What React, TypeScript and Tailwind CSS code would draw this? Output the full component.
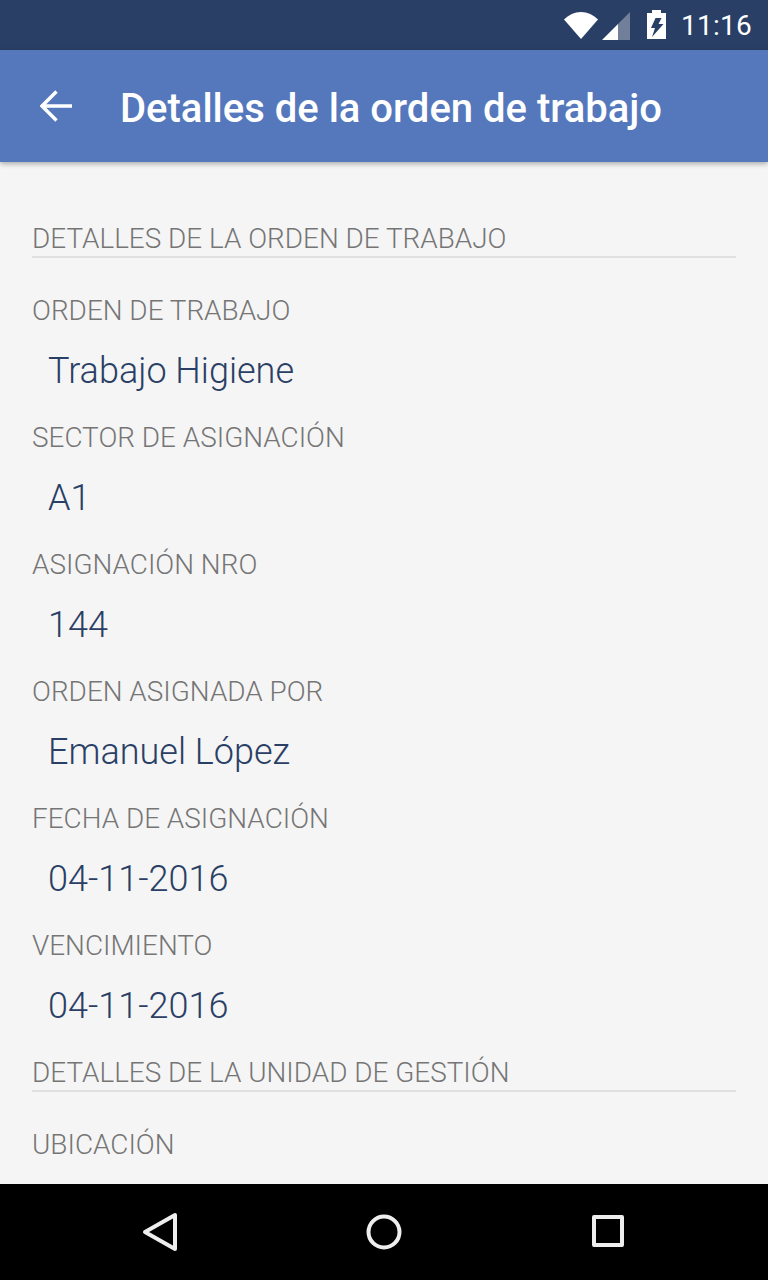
const fields = [
  { label: "ORDEN DE TRABAJO", value: "Trabajo Higiene" },
  { label: "SECTOR DE ASIGNACIÓN", value: "A1" },
  { label: "ASIGNACIÓN NRO", value: "144" },
  { label: "ORDEN ASIGNADA POR", value: "Emanuel López" },
  { label: "FECHA DE ASIGNACIÓN", value: "04-11-2016" },
  { label: "VENCIMIENTO", value: "04-11-2016" }
];

function SectionTitle({ text }: { text: string }) {
  return (
    <div className="h-[36px] border-b-2 border-[#e0e0e0] text-[27.9px] leading-[34px] font-light text-[#757575]">
      {text}
    </div>
  );
}

function StatusIcons() {
  return (
    <svg width="66" height="28" viewBox="0 0 66 28" className="mt-[1px]">
      <path d="M0 7.500C4.500 3 10.500 0 17 0s12.500 3 17 7.500L17 27z" fill="#fff" />
      <path d="M38 28L54 12v16z" fill="#fff" />
      <path d="M54 12L66 0v28H54z" fill="#717f9b" />
    </svg>
  );
}

function Battery() {
  return (
    <svg width="19" height="29" viewBox="0 0 19 29">
      <path d="M5 0h9v3h5v26H0V3h5z" fill="#fff" />
      <path d="M8.500 8h6l-3 6h5L5 27l3-9H4z" fill="#2a3f66" />
    </svg>
  );
}

export default function App() {
  return (
    <div className="flex h-[1280px] w-[768px] flex-col overflow-hidden bg-[#f5f5f5] font-['Roboto',sans-serif]">
      <div className="flex h-[50px] shrink-0 items-center justify-end bg-[#2a3f66] pr-4 text-white">
        <StatusIcons />
        <div className="ml-[17px] mr-[15px] mt-[-1px]"><Battery /></div>
        <span className="pt-[2px] text-[28px] leading-none tracking-[0.25px]">11:16</span>
      </div>

      <div className="z-10 flex h-[112px] shrink-0 items-center bg-[#5578bd] pl-[40px] shadow-[0_2px_5px_rgba(0,0,0,0.3)]">
        <svg width="32" height="32" viewBox="0 0 32 32" fill="none" stroke="#fff" strokeWidth="3.400">
          <path d="M32 16H3M16.500 1.500L2 16l14.500 14.500" />
        </svg>
        <h1 className="ml-[48px] pt-[6px] text-[40px] leading-none font-medium text-white">Detalles de la orden de trabajo</h1>
      </div>

      <div className="flex-1 overflow-hidden px-[32px] pt-[60px]">
        <SectionTitle text="DETALLES DE LA ORDEN DE TRABAJO" />
        <div className="mt-[36px]">
          {fields.map((f) => (
            <div key={f.label} className="h-[127px]">
              <div className="text-[27.9px] leading-[34px] font-light text-[#757575]">{f.label}</div>
              <div className="pl-[16px] pt-[17px] text-[36px] leading-[52px] font-light text-[#2a3f66]">{f.value}</div>
            </div>
          ))}
        </div>
        <SectionTitle text="DETALLES DE LA UNIDAD DE GESTIÓN" />
        <div className="mt-[36px] text-[27.9px] leading-[34px] font-light text-[#757575]">UBICACIÓN</div>
      </div>

      <div className="flex h-[96px] shrink-0 items-center bg-black">
        <div className="flex w-full justify-between px-[142px]">
          <svg width="36" height="40" viewBox="0 0 36 40" fill="none" stroke="#eee" strokeWidth="4" strokeLinejoin="round">
            <path d="M33 3v34L3 20z" />
          </svg>
          <svg width="36" height="40" viewBox="0 0 36 40" fill="none" stroke="#eee" strokeWidth="4">
            <circle cx="18" cy="20" r="15.500" />
          </svg>
          <svg width="36" height="40" viewBox="0 0 36 40" fill="none" stroke="#eee" strokeWidth="4" strokeLinejoin="round">
            <path d="M4 5h28v28H4z" />
          </svg>
        </div>
      </div>
    </div>
  );
}
